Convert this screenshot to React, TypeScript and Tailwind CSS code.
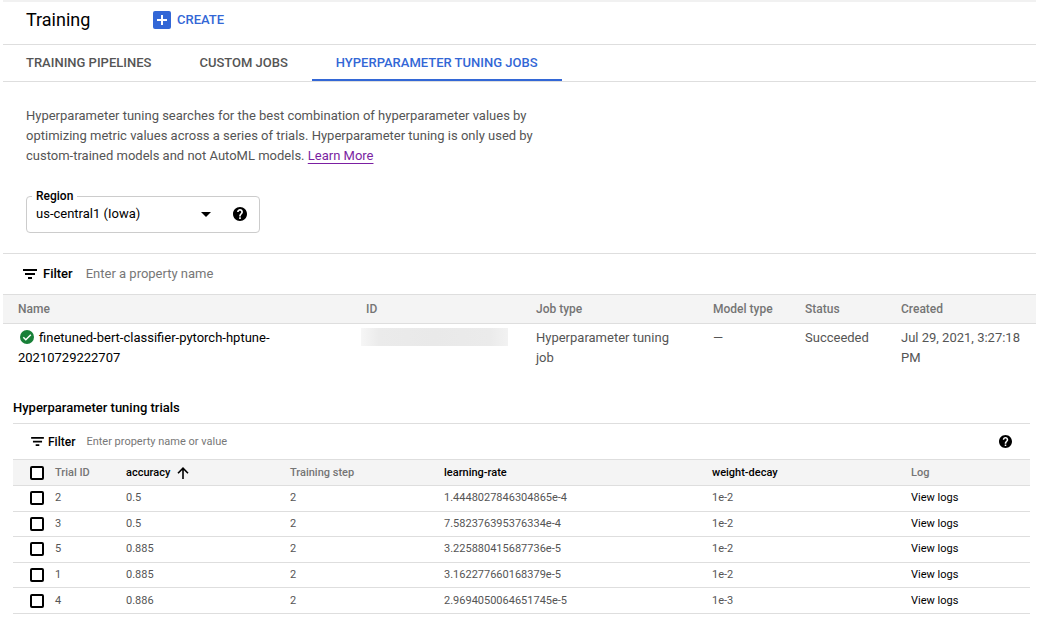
import React from "react";

const TABS = ["TRAINING PIPELINES", "CUSTOM JOBS", "HYPERPARAMETER TUNING JOBS"];

const TRIALS = [
  { id: "2", accuracy: "0.5", step: "2", rate: "1.4448027846304865e-4", decay: "1e-2" },
  { id: "3", accuracy: "0.5", step: "2", rate: "7.582376395376334e-4", decay: "1e-2" },
  { id: "5", accuracy: "0.885", step: "2", rate: "3.225880415687736e-5", decay: "1e-2" },
  { id: "1", accuracy: "0.885", step: "2", rate: "3.162277660168379e-5", decay: "1e-2" },
  { id: "4", accuracy: "0.886", step: "2", rate: "2.9694050064651745e-5", decay: "1e-3" },
];

function FilterIcon({ className }: { className: string }) {
  return (
    <svg viewBox="0 0 14 11" className={className} fill="currentColor" aria-hidden="true">
      <path d="M0 0h14v2H0zM2 4h10v2H2zM5 8h4v2H5z" />
    </svg>
  );
}

function HelpIcon({ className }: { className: string }) {
  return (
    <svg viewBox="2 2 20 20" className={className} fill="currentColor" aria-hidden="true">
      <path d="M12 2C6.48 2 2 6.48 2 12s4.48 10 10 10 10-4.48 10-10S17.52 2 12 2zm1.2 17h-2.4v-2.4h2.4V19zm2.3-7.6l-.9.92C13.6 13.3 13.2 14 13.2 15.4h-2.4v-.6c0-1.1.45-2.1 1.17-2.83l1.24-1.26c.37-.36.59-.86.59-1.41 0-1.1-.8-1.9-1.8-1.9s-1.9.8-1.9 1.9H7.8C7.8 6.9 9.7 5 12 5s4.2 1.9 4.2 4.2c0 .88-.28 1.68-.7 2.2z" />
    </svg>
  );
}

function Checkbox({ label }: { label: string }) {
  return (
    <input
      type="checkbox"
      aria-label={label}
      className="block size-[14px] appearance-none rounded-[2px] border-2 border-black bg-white checked:bg-black"
    />
  );
}

export default function App() {
  return (
    <div className="min-h-screen bg-white pr-1 pl-[3px] font-[Roboto,'Liberation_Sans',sans-serif] text-[13px] leading-5 text-[#555]">
      <div className="h-[2px] bg-[#f1f1f1]" />
      <header className="flex h-[43px] items-center border-b border-[#dedede] pb-[6px] pl-[23px]">
        <h1 className="w-[127px] text-lg text-black">Training</h1>
        <button type="button" className="flex items-center gap-[6px] font-medium text-[#3367d6]">
          <svg viewBox="0 0 18 18" className="size-[18px]" aria-hidden="true">
            <rect width="18" height="18" rx="2" fill="#3367d6" />
            <path d="M9 4v10M4 9h10" stroke="#fff" strokeWidth="2" />
          </svg>
          CREATE
        </button>
      </header>

      <nav className="flex h-[37px] border-b border-[#dedede]">
        {TABS.map((tab, i) => (
          <a
            key={tab}
            href="#"
            className={
              i === 2
                ? "border-b-2 border-[#3367d6] px-6 pt-2 font-medium text-[#3367d6]"
                : "px-6 pt-2 font-medium first:pl-[23px]"
            }
          >
            {tab}
          </a>
        ))}
      </nav>

      <section className="px-[23px] pt-6 pb-5">
        <p className="max-w-[520px]">
          Hyperparameter tuning searches for the best combination of hyperparameter values by
          optimizing metric values across a series of trials. Hyperparameter tuning is only used by
          custom-trained models and not AutoML models.{" "}
          <a href="#" className="text-[#7b1fa2] underline decoration-1 underline-offset-[3px]">
            Learn More
          </a>
        </p>
        <fieldset className="mt-[22px] flex h-[45px] w-[234px] items-center rounded-[4px] border border-[#ccc] pr-3 pb-2 text-black">
          <legend className="ml-[5px] px-1 text-xs leading-4 font-medium">
            <label htmlFor="region">Region</label>
          </legend>
          <div className="relative flex flex-1 items-center">
            <select id="region" className="w-full appearance-none bg-transparent pl-[9px] outline-none">
              <option>us-central1 (Iowa)</option>
            </select>
            <svg viewBox="0 0 10 5" className="pointer-events-none absolute right-[22px] h-[5px] w-[10px]" aria-hidden="true">
              <path d="M0 0h10L5 5z" />
            </svg>
          </div>
          <button type="button" aria-label="Region help">
            <HelpIcon className="size-[14px]" />
          </button>
        </fieldset>
      </section>

      <section className="border-t border-[#dedede]">
        <div className="flex h-10 items-center pl-5">
          <FilterIcon className="h-[11px] w-[14px] text-black" />
          <label htmlFor="jobs" className="ml-[6px] font-medium text-black">
            Filter
          </label>
          <input
            id="jobs"
            placeholder="Enter a property name"
            className="ml-[13px] flex-1 outline-none placeholder:text-[#777]"
          />
        </div>
        <table className="w-full table-fixed border-collapse text-left">
          <colgroup>
            <col className="w-[348px]" />
            <col className="w-[170px]" />
            <col className="w-[177px]" />
            <col className="w-[92px]" />
            <col className="w-[96px]" />
            <col className="w-[150px]" />
          </colgroup>
          <thead>
            <tr className="h-[29px] border-y border-[#dedede] bg-[#f4f4f4] text-xs text-[#757575]">
              {["Name", "ID", "Job type", "Model type", "Status", "Created"].map((h) => (
                <th key={h} className="pl-[15px] font-medium">
                  {h}
                </th>
              ))}
            </tr>
          </thead>
          <tbody>
            <tr className="align-top">
              <td className="py-1 pl-[15px] text-black">
                <svg viewBox="0 0 14 14" className="mr-[5px] ml-[2px] inline size-[14px] align-[-2px]" aria-label="Succeeded">
                  <circle cx="7" cy="7" r="7" fill="#188038" />
                  <path d="M3.3 7.2l2.5 2.5 5-5" fill="none" stroke="#fff" strokeWidth="1.5" />
                </svg>
                finetuned-bert-classifier-pytorch-hptune-
                <br />
                20210729222707
              </td>
              <td className="py-1 pr-[13px] pl-[10px]">
                <div className="h-[18px] bg-[linear-gradient(to_right,#f6f6f6,#ebebeb_12%,#e9e9e9_50%,#ebebeb_88%,#f2f2f2)]" />
              </td>
              <td className="py-1 pr-6 pl-[15px]">Hyperparameter tuning job</td>
              <td className="py-1 pl-[15px]">—</td>
              <td className="py-1 pl-[15px]">Succeeded</td>
              <td className="py-1 pr-2 pl-[15px]">Jul 29, 2021, 3:27:18 PM</td>
            </tr>
          </tbody>
        </table>
      </section>

      <section className="mr-[6px] ml-[10px] pt-[26px] pb-2">
        <h2 className="pb-[5px] font-medium text-black">Hyperparameter tuning trials</h2>
        <div className="flex h-9 items-center border-t border-[#dedede] pr-[18px] pl-[18px] text-[11px]">
          <FilterIcon className="h-[10px] w-[13px] text-black" />
          <label htmlFor="trials" className="ml-1 text-xs font-medium text-black">
            Filter
          </label>
          <input
            id="trials"
            placeholder="Enter property name or value"
            className="ml-[11px] flex-1 outline-none placeholder:text-[#777]"
          />
          <button type="button" aria-label="Trials help" className="text-black">
            <HelpIcon className="size-[13px]" />
          </button>
        </div>
        <table className="h-[155px] w-full table-fixed border-collapse text-left text-[11px] leading-4">
          <colgroup>
            <col className="w-[42px]" />
            <col className="w-[71px]" />
            <col className="w-[164px]" />
            <col className="w-[154px]" />
            <col className="w-[268px]" />
            <col className="w-[199px]" />
            <col className="w-[119px]" />
          </colgroup>
          <thead>
            <tr className="h-[26px] border-y border-[#dedede] bg-[#f4f4f4] text-[#757575]">
              <th className="pl-[17px]">
                <Checkbox label="Select all trials" />
              </th>
              <th className="font-medium">Trial ID</th>
              <th className="font-medium text-black">
                <button type="button" className="flex items-center gap-[7px]">
                  accuracy
                  <svg viewBox="0 0 12 12" className="size-3" fill="none" stroke="currentColor" strokeWidth="1.6" aria-hidden="true">
                    <path d="M6 12V1.2M1 6.2l5-5 5 5" />
                  </svg>
                </button>
              </th>
              <th className="font-medium">Training step</th>
              <th className="font-medium text-black">learning-rate</th>
              <th className="font-medium text-black">weight-decay</th>
              <th className="font-medium">Log</th>
            </tr>
          </thead>
          <tbody>
            {TRIALS.map((t) => (
              <tr key={t.id} className="border-b border-[#dedede]">
                <td className="pl-[17px]">
                  <Checkbox label={`Select trial ${t.id}`} />
                </td>
                <td>{t.id}</td>
                <td>{t.accuracy}</td>
                <td>{t.step}</td>
                <td>{t.rate}</td>
                <td>{t.decay}</td>
                <td>
                  <a href="#" className="text-black">
                    View logs
                  </a>
                </td>
              </tr>
            ))}
          </tbody>
        </table>
      </section>
    </div>
  );
}
